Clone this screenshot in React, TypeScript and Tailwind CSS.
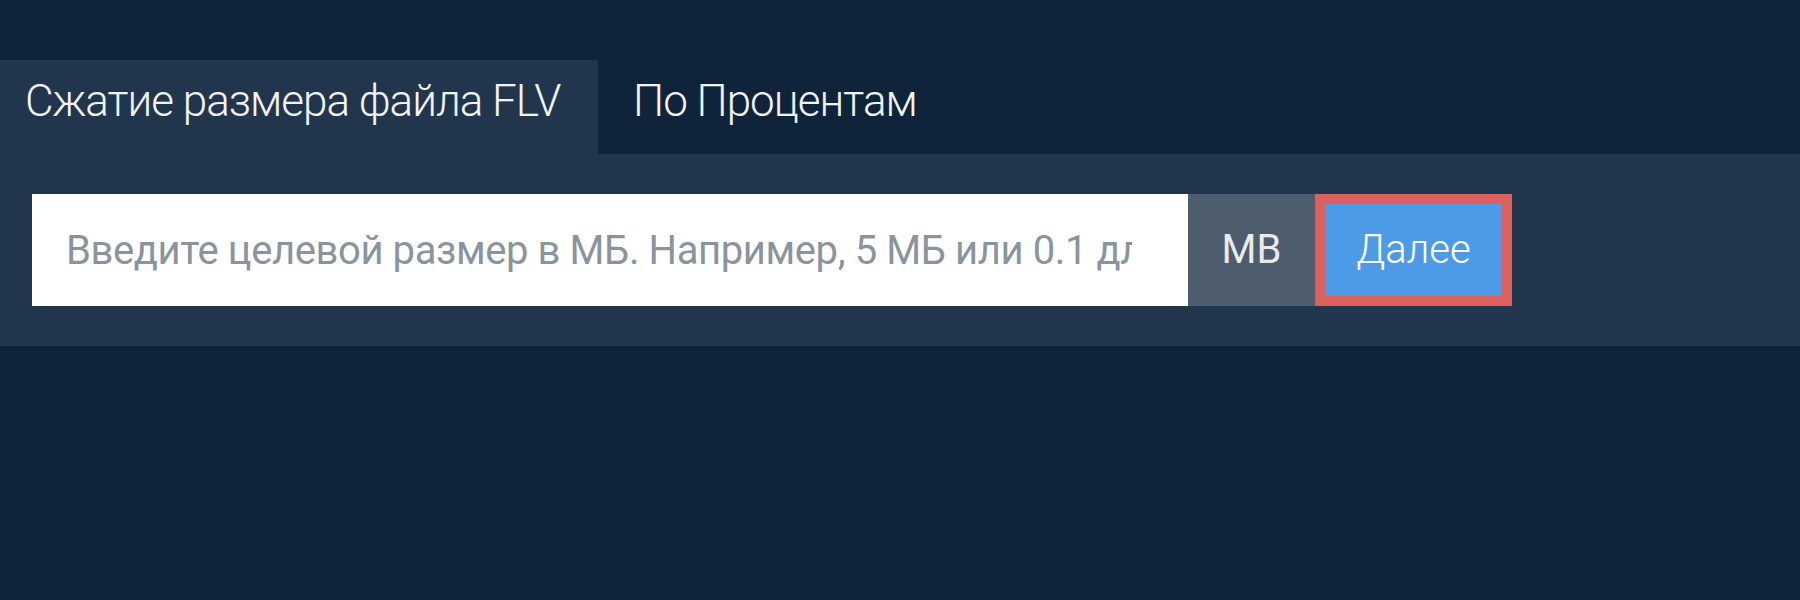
import { useState } from 'react';

const TABS = ['Сжатие размера файла FLV', 'По Процентам'];

export default function App() {
    const [active, setActive] = useState(0);
    const [size, setSize] = useState('');

    return (
        <div
            className="min-h-[600px] w-full bg-[#0f243a] pt-[60px]"
            style={{ fontFamily: 'Roboto, "Noto Sans", sans-serif' }}
        >
            {/* Tabs */}
            <div className="flex h-[94px]">
                {TABS.map((tab, i) => (
                    <button
                        key={tab}
                        onClick={() => setActive(i)}
                        className={`flex h-full items-start whitespace-nowrap pt-[15px] text-[44px] leading-[53px] font-light tracking-[-1px] text-[#f1f3f5] ${
                            i === 0 ? 'w-[598px] pl-[25px]' : 'pl-[35px] pr-[30px]'
                        } ${active === i ? 'bg-[#21364d]' : 'bg-transparent'}`}
                    >
                        {tab}
                    </button>
                ))}
            </div>

            {/* Panel */}
            <div className="flex h-[192px] items-start bg-[#21364d] px-[32px] pt-[40px]">
                <input
                    type="text"
                    value={size}
                    onChange={(e) => setSize(e.target.value)}
                    placeholder="Введите целевой размер в МБ. Например, 5 МБ или 0.1 для 100 КБ"
                    className="h-[112px] w-[1156px] bg-white pl-[34px] pr-[56px] text-[40px] tracking-[-0.4px] text-gray-700 outline-none placeholder:text-[#8a949e]"
                />
                <div className="flex h-[112px] w-[127px] items-center justify-center bg-[#4d5d6d] text-[40px] font-normal text-[#e8eaec]">
                    MB
                </div>
                <button className="h-[112px] w-[197px] border-[10px] border-[#dc605e] bg-[#4d9be6] text-[40px] font-light text-white">
                    Далее
                </button>
            </div>
        </div>
    );
}
